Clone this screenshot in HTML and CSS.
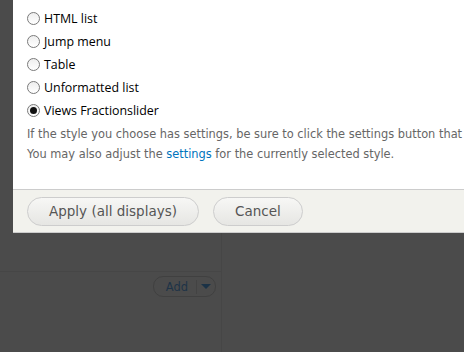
FILE: index.html
```html
<!DOCTYPE HTML>
<html>
<head>
	<meta http-equiv="Content-Type" content="text/html; charset=utf-8">
	<title>Views style</title>
	<link rel="stylesheet" href="styles.css">
</head>
<body>
	<div class="page">
		<div class="col-left">
			<div class="col-top"></div>
			<div class="add-row">
				<span class="add-btn"><span class="add-label">Add</span><span class="add-arrow"></span></span>
			</div>
		</div>
	</div>

	<div class="dialog">
		<div class="dialog-body">
			<ul class="options">
				<li><span class="radio"></span>HTML list</li>
				<li><span class="radio"></span>Jump menu</li>
				<li><span class="radio"></span>Table</li>
				<li><span class="radio"></span>Unformatted list</li>
				<li><span class="radio checked"></span>Views Fractionslider</li>
			</ul>
			<p class="desc">If the style you choose has settings, be sure to click the settings button that will appear next to it in the View summary.</p>
			<p class="desc">You may also adjust the <a href="#">settings</a> for the currently selected style.</p>
		</div>
		<div class="dialog-foot">
			<button class="btn">Apply (all displays)</button>
			<button class="btn">Cancel</button>
		</div>
	</div>
</body>
</html>
```
FILE: styles.css
```css
body{
	margin: 0;
	background-color: #4b4b4b;
	font-family: "DejaVu Sans", Verdana, sans-serif;
	overflow: hidden;
}
.page{
	height: 352px;
}
.col-left{
	width: 221px;
	height: 352px;
	border-right: 1px solid #464646;
}
.col-top{
	height: 271px;
	border-bottom: 1px solid #464646;
}
.add-row{
	display: flex;
	justify-content: flex-end;
	padding: 4px 5px 0 0;
}
.add-btn{
	display: flex;
	align-items: center;
	height: 19px;
	border: 1px solid #404040;
	border-radius: 10px;
	padding: 0 4px 0 12px;
}
.add-label{
	color: #1e3347;
	font-size: 11.5px;
	padding-right: 8px;
	border-right: 1px solid #434343;
	line-height: 14px;
}
.add-arrow{
	width: 0;
	height: 0;
	margin-left: 4px;
	border-left: 5px solid transparent;
	border-right: 5px solid transparent;
	border-top: 5px solid #1b3246;
}

.dialog{
	position: absolute;
	top: 0;
	left: 13px;
	right: 0;
	background-color: #fff;
}
.dialog-body{
	height: 189px;
	padding: 0 0 0 14px;
	box-sizing: border-box;
	white-space: nowrap;
	overflow: hidden;
}
.options{
	list-style: none;
	margin: 0;
	padding: 7px 0 0 0;
}
.options li{
	height: 23px;
	display: flex;
	align-items: center;
	font-family: "Open Sans", sans-serif;
	font-size: 12.4px;
	color: #000;
}
.radio{
	width: 11px;
	height: 11px;
	border: 1px solid #7a7a7a;
	border-radius: 50%;
	background: linear-gradient(#eee, #fff);
	margin-right: 4px;
	position: relative;
}
.radio.checked::after{
	content: "";
	position: absolute;
	left: 2px;
	top: 2px;
	width: 7px;
	height: 7px;
	border-radius: 50%;
	background-color: #111;
}
.desc{
	margin: 0;
	font-size: 11.4px;
	line-height: 20px;
	color: #666;
}
.desc:first-of-type{
	margin-top: 2px;
}
.desc a{
	color: #0074bd;
	text-decoration: none;
}
.dialog-foot{
	height: 42px;
	border-top: 1px solid #ccc;
	border-bottom: 1px solid #ccc;
	background-color: #f2f2ed;
	display: flex;
	align-items: center;
	padding-left: 14px;
	gap: 14px;
}
.btn{
	font-family: "DejaVu Sans", Verdana, sans-serif;
	font-size: 13.5px;
	color: #555;
	height: 29px;
	border: 1px solid #cdcdcd;
	border-radius: 15px;
	background: linear-gradient(#f7f7f5, #e6e6e3);
	padding: 0 21px;
}
```
